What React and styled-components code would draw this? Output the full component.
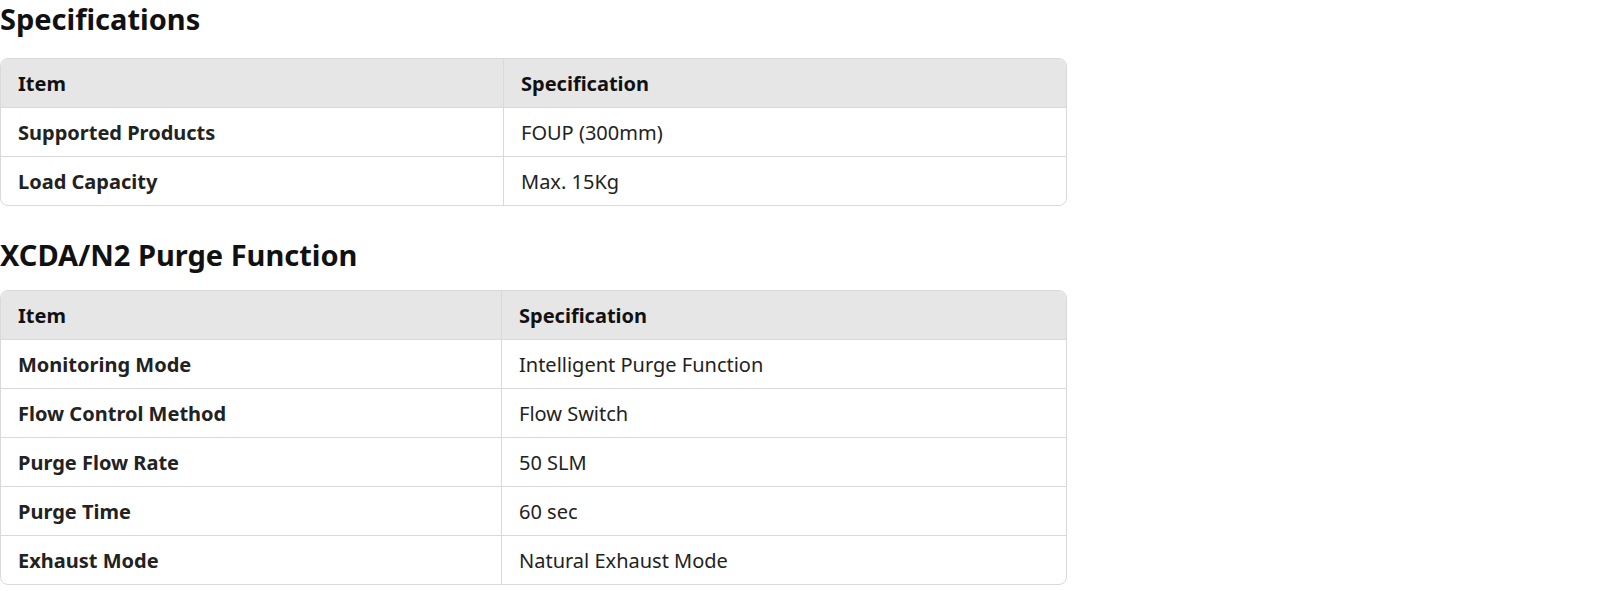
import React from "react"
import styled, { createGlobalStyle } from "styled-components"

const GlobalStyle = createGlobalStyle`
  body {
    margin: 0;
    background: #fff;
    font-family: "Noto Sans", "Noto Sans CJK KR", sans-serif;
    color: #111;
  }
`

const Page = styled.div`
  width: 1067px;
`

const Title = styled.h2`
  margin: 0;
  font-size: 29px;
  font-weight: 700;
  line-height: 38px;
  color: #111;
  padding-top: ${(p) => p.$top}px;
  padding-bottom: ${(p) => p.$bottom}px;
`

const Table = styled.table`
  width: 100%;
  border-collapse: separate;
  border-spacing: 0;
  border: 1px solid #d9d9d9;
  border-radius: 8px;
  overflow: hidden;
  font-size: 20px;

  th:first-child,
  td:first-child {
    width: ${(p) => p.$firstCol - 35}px;
    border-right: 1px solid #d9d9d9;
  }
`

const Head = styled.th`
  background: #e6e6e6;
  text-align: left;
  font-weight: 700;
  color: #111;
  height: 47px;
  padding: 1px 17px 0;
`

const Cell = styled.td`
  height: 47px;
  padding: 1px 17px 0;
  border-top: 1px solid #d9d9d9;
  color: #222;
  font-weight: ${(p) => (p.$bold ? 700 : 400)};
`

function SpecTable({ rows, firstCol }) {
  return (
    <Table $firstCol={firstCol}>
      <thead>
        <tr>
          <Head>Item</Head>
          <Head>Specification</Head>
        </tr>
      </thead>
      <tbody>
        {rows.map(([item, spec]) => (
          <tr key={item}>
            <Cell $bold>{item}</Cell>
            <Cell>{spec}</Cell>
          </tr>
        ))}
      </tbody>
    </Table>
  )
}

export default function App() {
  return (
    <Page>
      <GlobalStyle />
      <Title $top={0} $bottom={20}>Specifications</Title>
      <SpecTable
        firstCol={503}
        rows={[
          ["Supported Products", "FOUP (300mm)"],
          ["Load Capacity", "Max. 15Kg"],
        ]}
      />
      <Title $top={30} $bottom={16}>XCDA/N2 Purge Function</Title>
      <SpecTable
        firstCol={501}
        rows={[
          ["Monitoring Mode", "Intelligent Purge Function"],
          ["Flow Control Method", "Flow Switch"],
          ["Purge Flow Rate", "50 SLM"],
          ["Purge Time", "60 sec"],
          ["Exhaust Mode", "Natural Exhaust Mode"],
        ]}
      />
    </Page>
  )
}
